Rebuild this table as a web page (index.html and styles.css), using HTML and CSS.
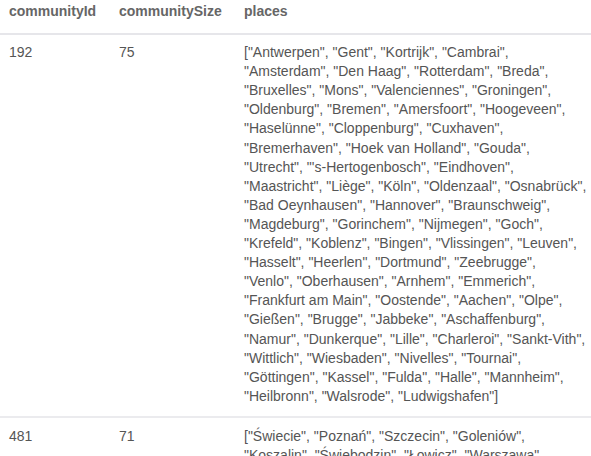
FILE: index.html
```html
<!DOCTYPE html>
<html>
<head>
<meta charset="utf-8">
<link rel="stylesheet" href="styles.css">
</head>
<body>
<table class="grid">
  <colgroup>
    <col class="c-id">
    <col class="c-size">
    <col class="c-places">
  </colgroup>
  <thead>
    <tr>
      <th>communityId</th>
      <th>communitySize</th>
      <th>places</th>
    </tr>
  </thead>
  <tbody>
    <tr>
      <td>192</td>
      <td>75</td>
      <td>["Antwerpen", "Gent", "Kortrijk", "Cambrai", "Amsterdam", "Den Haag", "Rotterdam", "Breda", "Bruxelles", "Mons", "Valenciennes", "Groningen", "Oldenburg", "Bremen", "Amersfoort", "Hoogeveen", "Haselünne", "Cloppenburg", "Cuxhaven", "Bremerhaven", "Hoek van Holland", "Gouda", "Utrecht", "'s-Hertogenbosch", "Eindhoven", "Maastricht", "Liège", "Köln", "Oldenzaal", "Osnabrück", "Bad Oeynhausen", "Hannover", "Braunschweig", "Magdeburg", "Gorinchem", "Nijmegen", "Goch", "Krefeld", "Koblenz", "Bingen", "Vlissingen", "Leuven", "Hasselt", "Heerlen", "Dortmund", "Zeebrugge", "Venlo", "Oberhausen", "Arnhem", "Emmerich", "Frankfurt am Main", "Oostende", "Aachen", "Olpe", "Gießen", "Brugge", "Jabbeke", "Aschaffenburg", "Namur", "Dunkerque", "Lille", "Charleroi", "Sankt-Vith", "Wittlich", "Wiesbaden", "Nivelles", "Tournai", "Göttingen", "Kassel", "Fulda", "Halle", "Mannheim", "Heilbronn", "Walsrode", "Ludwigshafen"]</td>
    </tr>
    <tr>
      <td>481</td>
      <td>71</td>
      <td>["Świecie", "Poznań", "Szczecin", "Goleniów", "Koszalin", "Świebodzin", "Łowicz", "Warszawa", "Gdańsk", "Bydgoszcz", "Toruń", "Wrocław"]</td>
    </tr>
  </tbody>
</table>
</body>
</html>
```

FILE: styles.css
```css
html, body {
  margin: 0;
  padding: 0;
  background: #ffffff;
}

body {
  font-family: "Liberation Sans", Arial, sans-serif;
  font-size: 14px;
  line-height: 19.1px;
  color: #555555;
  overflow: hidden;
}

.grid {
  border-collapse: collapse;
  table-layout: fixed;
  width: 597px;
}

.c-id { width: 110px; }
.c-size { width: 125px; }
.c-places { width: 362px; }

.grid th {
  text-align: left;
  font-weight: bold;
  color: #666666;
  padding: 2px 9px 12px 9px;
  border-bottom: 2px solid #e6e6ea;
  vertical-align: bottom;
}

.grid td {
  padding: 9px 9px 10px 9px;
  vertical-align: top;
  border-bottom: 2px solid #ebebee;
}

.grid tbody tr:first-child td {
  padding-top: 8px;
}
```
